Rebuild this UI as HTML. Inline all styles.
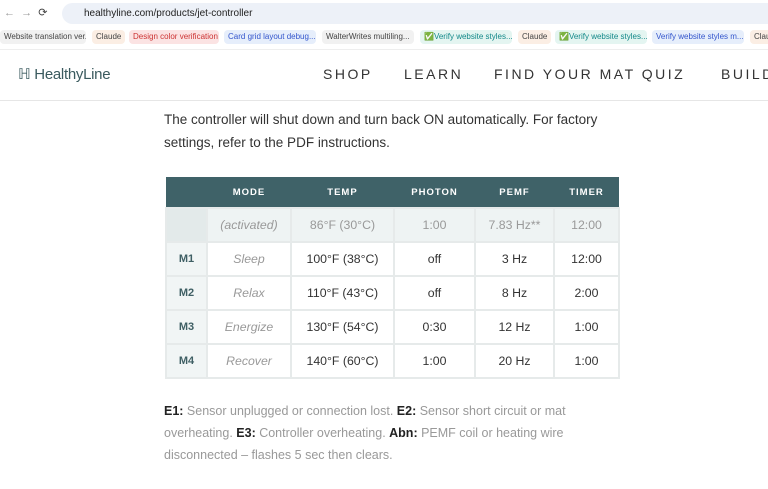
<!DOCTYPE html><html><head><style>
*{margin:0;padding:0;box-sizing:border-box}
body{width:768px;height:489px;overflow:hidden;background:#fff;font-family:"Liberation Sans",sans-serif;position:relative}
.top{position:absolute;left:0;top:0;width:768px;height:27px;background:#fff}
.url{position:absolute;left:62px;top:3px;width:720px;height:21px;background:#edf1f8;border-radius:11px;font-size:10px;color:#222;padding:5px 0 0 22px}
.bm{position:absolute;top:27px;left:0;width:768px;height:21px;background:#fff}
.b{position:absolute;top:3px;height:14px;border-radius:4px;font-size:8px;line-height:14px;padding:0 4px;white-space:nowrap;overflow:hidden}
.nav{position:absolute;top:49px;left:0;width:768px;height:52px;border-bottom:1px solid #e6e6e6;border-top:1px solid #eee}
.logo{position:absolute;left:18px;top:15px;font-size:15px;color:#3a5a5e;letter-spacing:-.3px}
.menu{position:absolute;top:16px;font-size:14px;letter-spacing:2.5px;color:#333}
p{position:absolute;left:164px;font-size:13.5px;color:#333;line-height:23px}
table{position:absolute;left:165px;top:177px;border-collapse:collapse;font-size:12.3px;color:#333}
td,th{border:2px solid #e6eaea;text-align:center;height:34px}
th{background:#3f6268;color:#fff;font-size:9.5px;letter-spacing:1px;height:31px;border:none}
td.m{color:#3f5f64;font-weight:bold;background:#f1f5f5;font-size:11px}
td.i{color:#999;font-style:italic}
tr.a td{background:#eef3f3;color:#999}
.f{position:absolute;left:164px;top:400px;width:445px;font-size:12.5px;color:#999;line-height:22px}
.f b{color:#222}
</style></head><body>
<div class="top"><span style="position:absolute;left:4px;top:6px;font-size:11px;color:#999">← &nbsp;→ &nbsp;<span style="color:#444">⟳</span></span><div class="url">healthyline.com/products/jet-controller</div></div>
<div class="bm">
<div class="b" style="left:0;width:86px;background:#f1f1f1;color:#444">Website translation ver...</div>
<div class="b" style="left:92px;background:#fbeee4;color:#444">Claude</div>
<div class="b" style="left:129px;width:90px;background:#fbe3e3;color:#c33">Design color verification</div>
<div class="b" style="left:224px;width:92px;background:#e6eefb;color:#35c">Card grid layout debug...</div>
<div class="b" style="left:322px;width:92px;background:#f1f1f1;color:#444">WalterWrites multiling...</div>
<div class="b" style="left:420px;width:92px;background:#e4f5f1;color:#188">✅Verify website styles...</div>
<div class="b" style="left:518px;background:#fbeee4;color:#444">Claude</div>
<div class="b" style="left:555px;width:92px;background:#e4f5f1;color:#188">✅Verify website styles...</div>
<div class="b" style="left:652px;width:92px;background:#e6eefb;color:#35c">Verify website styles m...</div>
<div class="b" style="left:750px;width:30px;background:#fbeee4;color:#444">Claude</div>
</div>
<div class="nav"><div class="logo">ℍ HealthyLine</div>
<div class="menu" style="left:323px">SHOP</div><div class="menu" style="left:404px">LEARN</div><div class="menu" style="left:494px">FIND YOUR MAT QUIZ</div><div class="menu" style="left:721px">BUILD</div></div>
<p style="top:108px">The controller will shut down and turn back ON automatically. For factory<br>settings, refer to the PDF instructions.</p>
<table>
<tr><th style="width:41px"></th><th style="width:84px">MODE</th><th style="width:103px">TEMP</th><th style="width:81px">PHOTON</th><th style="width:79px">PEMF</th><th style="width:65px">TIMER</th></tr>
<tr class="a"><td style="background:#e3eaea"></td><td><i>(activated)</i></td><td>86°F (30°C)</td><td>1:00</td><td>7.83 Hz**</td><td>12:00</td></tr>
<tr><td class="m">M1</td><td class="i">Sleep</td><td>100°F (38°C)</td><td>off</td><td>3 Hz</td><td>12:00</td></tr>
<tr><td class="m">M2</td><td class="i">Relax</td><td>110°F (43°C)</td><td>off</td><td>8 Hz</td><td>2:00</td></tr>
<tr><td class="m">M3</td><td class="i">Energize</td><td>130°F (54°C)</td><td>0:30</td><td>12 Hz</td><td>1:00</td></tr>
<tr><td class="m">M4</td><td class="i">Recover</td><td>140°F (60°C)</td><td>1:00</td><td>20 Hz</td><td>1:00</td></tr>
</table>
<div class="f"><b>E1:</b> Sensor unplugged or connection lost. <b>E2:</b> Sensor short circuit or mat overheating. <b>E3:</b> Controller overheating. <b>Abn:</b> PEMF coil or heating wire disconnected – flashes 5 sec then clears.</div>
</body></html>
